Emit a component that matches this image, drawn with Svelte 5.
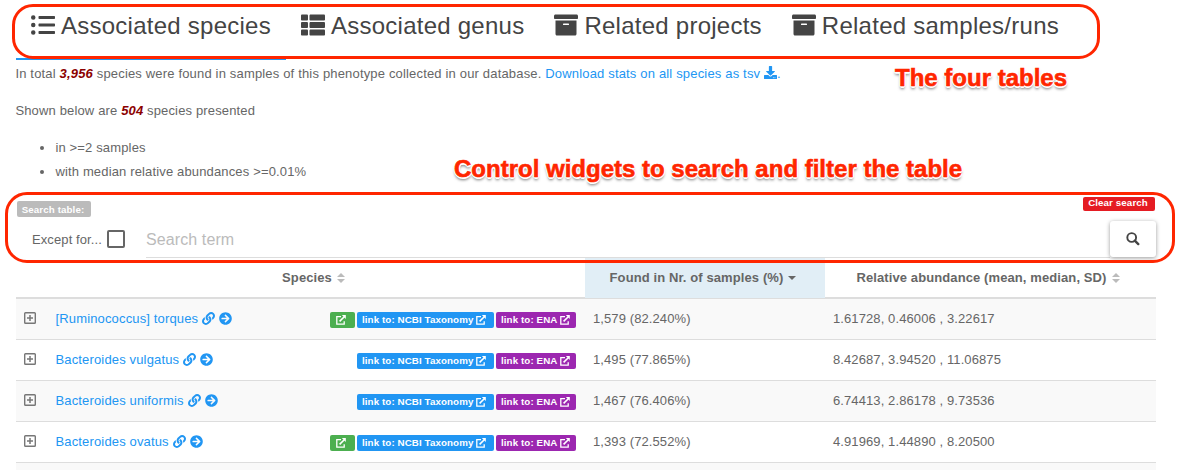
<script>
  const icons = {
    list: 'M48 48a48 48 0 1 0 48 48 48 48 0 0 0-48-48zm0 160a48 48 0 1 0 48 48 48 48 0 0 0-48-48zm0 160a48 48 0 1 0 48 48 48 48 0 0 0-48-48zm448 16H176a16 16 0 0 0-16 16v32a16 16 0 0 0 16 16h320a16 16 0 0 0 16-16v-32a16 16 0 0 0-16-16zm0-320H176a16 16 0 0 0-16 16v32a16 16 0 0 0 16 16h320a16 16 0 0 0 16-16V80a16 16 0 0 0-16-16zm0 160H176a16 16 0 0 0-16 16v32a16 16 0 0 0 16 16h320a16 16 0 0 0 16-16v-32a16 16 0 0 0-16-16z',
    thList: 'M149.333 216v80c0 13.255-10.745 24-24 24H24c-13.255 0-24-10.745-24-24v-80c0-13.255 10.745-24 24-24h101.333c13.255 0 24 10.745 24 24zM0 376v80c0 13.255 10.745 24 24 24h101.333c13.255 0 24-10.745 24-24v-80c0-13.255-10.745-24-24-24H24c-13.255 0-24 10.745-24 24zM125.333 32H24C10.745 32 0 42.745 0 56v80c0 13.255 10.745 24 24 24h101.333c13.255 0 24-10.745 24-24V56c0-13.255-10.745-24-24-24zm80 448H488c13.255 0 24-10.745 24-24v-80c0-13.255-10.745-24-24-24H205.333c-13.255 0-24 10.745-24 24v80c0 13.255 10.745 24 24 24zm-24-424v80c0 13.255 10.745 24 24 24H488c13.255 0 24-10.745 24-24V56c0-13.255-10.745-24-24-24H205.333c-13.255 0-24 10.745-24 24zm24 264H488c13.255 0 24-10.745 24-24v-80c0-13.255-10.745-24-24-24H205.333c-13.255 0-24 10.745-24 24v80c0 13.255 10.745 24 24 24z',
    archive: 'M32 448c0 17.7 14.3 32 32 32h384c17.7 0 32-14.3 32-32V160H32v288zm160-212c0-6.6 5.4-12 12-12h104c6.6 0 12 5.4 12 12v8c0 6.6-5.4 12-12 12H204c-6.6 0-12-5.4-12-12v-8zM480 32H32C14.3 32 0 46.3 0 64v48c0 8.8 7.2 16 16 16h480c8.8 0 16-7.2 16-16V64c0-17.7-14.3-32-32-32z',
    download: 'M216 0h80c13.3 0 24 10.7 24 24v168h87.7c17.8 0 26.7 21.5 14.1 34.1L269.7 378.3c-7.5 7.5-19.8 7.5-27.3 0L90.1 226.1c-12.6-12.6-3.7-34.1 14.1-34.1H192V24c0-13.3 10.7-24 24-24zm296 376v112c0 13.3-10.7 24-24 24H24c-13.3 0-24-10.7-24-24V376c0-13.3 10.7-24 24-24h146.7l49 49c20.1 20.1 52.5 20.1 72.6 0l49-49H488c13.3 0 24 10.7 24 24zm-124 88c0-11-9-20-20-20s-20 9-20 20 9 20 20 20 20-9 20-20zm64 0c0-11-9-20-20-20s-20 9-20 20 9 20 20 20 20-9 20-20z',
    link: 'M326.612 185.391c59.747 59.809 58.927 155.698.36 214.59-.11.12-.24.25-.36.37l-67.2 67.2c-59.27 59.27-155.699 59.262-214.96 0-59.27-59.26-59.27-155.7 0-214.96l37.106-37.106c9.84-9.84 26.786-3.3 27.294 10.606.648 17.722 3.826 35.527 9.69 52.721 1.986 5.822.567 12.262-3.783 16.612l-13.087 13.087c-28.026 28.026-28.905 73.66-1.155 101.96 28.024 28.579 74.086 28.749 102.325.51l67.2-67.19c28.191-28.191 28.073-73.757 0-101.83-3.701-3.694-7.429-6.564-10.341-8.569a16.037 16.037 0 0 1-6.947-12.606c-.396-10.567 3.348-21.456 11.698-29.806l21.054-21.055c5.521-5.521 14.182-6.199 20.584-1.731a152.482 152.482 0 0 1 20.522 17.197zM467.547 44.449c-59.261-59.262-155.69-59.27-214.96 0l-67.2 67.2c-.12.12-.25.25-.36.37-58.566 58.892-59.387 154.781.36 214.59a152.454 152.454 0 0 0 20.521 17.196c6.402 4.468 15.064 3.789 20.584-1.731l21.054-21.055c8.35-8.35 12.094-19.239 11.698-29.806a16.037 16.037 0 0 0-6.947-12.606c-2.912-2.005-6.64-4.875-10.341-8.569-28.073-28.073-28.191-73.639 0-101.83l67.2-67.19c28.239-28.239 74.3-28.069 102.325.51 27.75 28.3 26.872 73.934-1.155 101.96l-13.087 13.087c-4.35 4.35-5.769 10.79-3.783 16.612 5.864 17.194 9.042 34.999 9.69 52.721.509 13.906 17.454 20.446 27.294 10.606l37.106-37.106c59.271-59.259 59.271-155.699.001-214.959z',
    arrow: 'M256 8c137 0 248 111 248 248S393 504 256 504 8 393 8 256 119 8 256 8zm-28.9 143.6l75.5 72.4H120c-13.3 0-24 10.7-24 24v16c0 13.3 10.7 24 24 24h182.6l-75.5 72.4c-9.7 9.3-9.9 24.8-.4 34.3l11 10.9c9.4 9.4 24.6 9.4 33.9 0L404.3 273c9.4-9.4 9.4-24.6 0-33.9L271.6 106.3c-9.4-9.4-24.6-9.4-33.9 0l-11 10.9c-9.5 9.6-9.3 25.1.4 34.4z'
  };

  const tabs = [
    { icon: 'list', label: 'Associated species', active: true },
    { icon: 'thList', label: 'Associated genus' },
    { icon: 'archive', label: 'Related projects' },
    { icon: 'archive', label: 'Related samples/runs' }
  ];

  const rows = [
    { name: '[Ruminococcus] torques', extra: true, found: '1,579 (82.240%)', abundance: '1.61728, 0.46006 , 3.22617' },
    { name: 'Bacteroides vulgatus', extra: false, found: '1,495 (77.865%)', abundance: '8.42687, 3.94520 , 11.06875' },
    { name: 'Bacteroides uniformis', extra: false, found: '1,467 (76.406%)', abundance: '6.74413, 2.86178 , 9.73536' },
    { name: 'Bacteroides ovatus', extra: true, found: '1,393 (72.552%)', abundance: '4.91969, 1.44890 , 8.20500' }
  ];
</script>

{#snippet glyph(name, size)}
  <svg class="glyph" width={size} height={size} viewBox="0 0 512 512"><path d={icons[name]} /></svg>
{/snippet}

{#snippet external()}
  <svg class="external" width="10" height="10" viewBox="0 0 10 10">
    <path d="M5 1.6H.8V9.2H8.2V6.2" fill="none" stroke="currentColor" stroke-width="1.3" />
    <path d="M3.6 6.4L8.3 1.7" fill="none" stroke="currentColor" stroke-width="1.6" />
    <path d="M5.8.1H9.8V4.1z" fill="currentColor" />
  </svg>
{/snippet}

{#snippet sort()}
  <svg class="sort" width="8" height="10" viewBox="0 0 8 10"><path d="M0 4L4 0L8 4zM0 6H8L4 10z" /></svg>
{/snippet}

<main>
  <nav>
    {#each tabs as tab}
      <div class="tab" class:active={tab.active}>
        {@render glyph(tab.icon, 24)}<span>{tab.label}</span>
      </div>
    {/each}
  </nav>

  <div class="intro">
    <p class="total">
      In total <b>3,956</b> species were found in samples of this phenotype collected in our database.
      <span class="link">Download stats on all species as tsv {@render glyph('download', 13)}.</span>
    </p>
    <p class="shown">Shown below are <b>504</b> species presented</p>
    <ul>
      <li>in &gt;=2 samples</li>
      <li>with median relative abundances &gt;=0.01%</li>
    </ul>
  </div>

  <section class="search">
    <div class="labels">
      <span class="label grey">Search table:</span>
      <span class="label red">Clear search</span>
    </div>
    <div class="controls">
      <div class="except">Except for...<i class="box"></i></div>
      <div class="term">Search term</div>
      <div class="go">
        <svg width="14" height="14" viewBox="0 0 14 14" fill="none" stroke="#444">
          <circle cx="5.7" cy="5.5" r="4.4" stroke-width="1.9" />
          <path d="M8.8 8.7L12.3 12.1" stroke-width="2.4" stroke-linecap="round" />
        </svg>
      </div>
    </div>
  </section>

  <div class="table">
    <div class="row head">
      <div class="cell first">Species{@render sort()}</div>
      <div class="cell sorted">Found in Nr. of samples (%)<svg class="sort down" width="8" height="4" viewBox="0 0 8 4"><path d="M0 0H8L4 4z" /></svg></div>
      <div class="cell last">Relative abundance (mean, median, SD){@render sort()}</div>
    </div>
    {#each rows as row}
      <div class="row">
        <div class="cell species">
          <svg class="plus" width="12" height="12" viewBox="0 0 12 12" fill="none" stroke="#777">
            <rect x=".7" y=".7" width="10.6" height="10.6" rx=".8" stroke-width="1.4" />
            <path d="M6 3V9M3 6H9" stroke-width="1.5" />
          </svg>
          <span class="name">{row.name}</span>
          {@render glyph('link', 13)}
          {@render glyph('arrow', 13)}
          <div class="badges">
            {#if row.extra}<span class="badge green">{@render external()}</span>{/if}
            <span class="badge blue">link to: NCBI Taxonomy{@render external()}</span>
            <span class="badge purple">link to: ENA{@render external()}</span>
          </div>
        </div>
        <div class="cell">{row.found}</div>
        <div class="cell">{row.abundance}</div>
      </div>
    {/each}
    <div class="row"></div>
  </div>

  <div class="frame tabs-frame"></div>
  <div class="frame search-frame"></div>
  <div class="note tabs-note">The four tables</div>
  <div class="note search-note">Control widgets to search and filter the table</div>
</main>

<style>
  :global(body) { background: #fff; overflow: hidden; }
  main {
    position: relative;
    box-sizing: border-box;
    width: 1177px;
    height: 470px;
    padding: 0 21px 0 16px;
    overflow: hidden;
    font: 13px/24px 'Liberation Sans', Arial, sans-serif;
    letter-spacing: 0.1px;
    color: #666;
  }
  svg { flex: none; }
  .glyph { fill: currentColor; }
  nav { display: flex; height: 60px; }
  .tab {
    box-sizing: border-box;
    display: flex;
    height: 60px;
    padding: 6px 15px 0;
    font-size: 24px;
    line-height: 40px;
    letter-spacing: 0.25px;
    color: #444;
    white-space: nowrap;
  }
  .tab .glyph { margin: 7px 6px 0 0; }
  .tab.active { border-bottom: 2px solid #2196f3; }
  .intro { margin-left: -0.6px; letter-spacing: 0.15px; }
  p { margin: 0; white-space: nowrap; }
  .total { padding-top: 2px; letter-spacing: 0.17px; }
  .total .glyph { vertical-align: -1px; }
  .shown { padding-top: 13px; }
  b { font-style: italic; color: #8b0000; }
  .link { color: #2196f3; }
  ul { margin: 13px 0 0; padding: 0 0 0 40px; }
  .search { height: 74px; }
  .labels { display: flex; justify-content: space-between; padding: 13px 1px 0; height: 24px; }
  .label {
    box-sizing: border-box;
    height: 16px;
    padding-right: 2px;
    border-radius: 2px;
    font-size: 9.75px;
    font-weight: bold;
    line-height: 17px;
    text-align: center;
    color: #fff;
  }
  .grey { width: 74px; margin-top: 4px; background: #bbb; }
  .red { width: 72px; height: 14px; line-height: 12px; background: #e51c23; }
  .controls { display: flex; height: 37px; }
  .except { box-sizing: border-box; display: flex; justify-content: space-between; width: 130px; padding: 0 21px 0 16px; line-height: 38px; }
  .box { box-sizing: border-box; width: 18px; height: 18px; margin: 9px 0 0; border: 2px solid #666; border-radius: 2px; }
  .term { width: 964px; height: 36px; border-bottom: 1px solid #ddd; font-size: 16px; line-height: 37px; color: #bbb; }
  .go {
    display: flex;
    align-items: center;
    justify-content: center;
    width: 46px;
    height: 36px;
    border-radius: 3px;
    background: #fff;
    box-shadow: 0 1px 4px rgba(0, 0, 0, 0.4);
  }
  .row {
    display: grid;
    grid-template-columns: 569px 240px 331px;
    box-sizing: border-box;
    height: 41px;
    border-bottom: 1px solid #ddd;
    line-height: 40px;
    white-space: nowrap;
  }
  .row:nth-child(even) { background: #f9f9f9; }
  .cell { padding-left: 8px; }
  .head { border-bottom-width: 2px; font-weight: bold; }
  .head .cell { display: flex; align-items: center; justify-content: center; padding: 0 12px 0 8px; }
  .head .first { padding: 0 8px 0 34px; }
  .head .last { padding-right: 13px; }
  .sorted { background: #e1eef6; }
  .sort { margin-left: 5px; fill: #bbb; }
  .sort.down { fill: #666; }
  .species { display: flex; align-items: center; padding: 0 8px 0 7.5px; color: #2196f3; }
  .plus { margin: 0 20px 2px 0; }
  .name { letter-spacing: 0.15px; }
  .species .glyph { margin: 0 0 2px 4px; }
  .badges { display: flex; gap: 2px; margin: 2px 1px 0 auto; }
  .badge {
    box-sizing: border-box;
    display: flex;
    height: 16px;
    padding-left: 5px;
    border-radius: 2px;
    font-size: 9.75px;
    font-weight: bold;
    line-height: 16px;
    color: #fff;
  }
  .external { margin: 3px 0 0 2.5px; }
  .green { width: 25px; padding-left: 3px; background: #4caf50; }
  .blue { width: 137px; background: #2196f3; }
  .purple { width: 80px; background: #9c27b0; }
  .frame { position: absolute; box-sizing: border-box; border: 3px solid #ff2600; }
  .tabs-frame { left: 12px; top: 4px; width: 1088px; height: 55px; border-radius: 21px; }
  .search-frame { left: 5px; top: 192px; width: 1170px; height: 71px; border-radius: 22px; }
  .note {
    position: absolute;
    font-size: 24px;
    font-weight: bold;
    line-height: 28px;
    letter-spacing: 0;
    white-space: nowrap;
    color: #ff2600;
    -webkit-text-stroke: 0.6px #ff2600;
    text-shadow: 1.5px 0 #fff, -1.5px 0 #fff, 0 1.5px #fff, 0 -1.5px #fff, 1px 1px #fff, -1px 1px #fff, 0 3px 3px rgba(0, 0, 0, 0.55);
  }
  .tabs-note { left: 895px; top: 64px; }
  .search-note { left: 454px; top: 155px; }
</style>
